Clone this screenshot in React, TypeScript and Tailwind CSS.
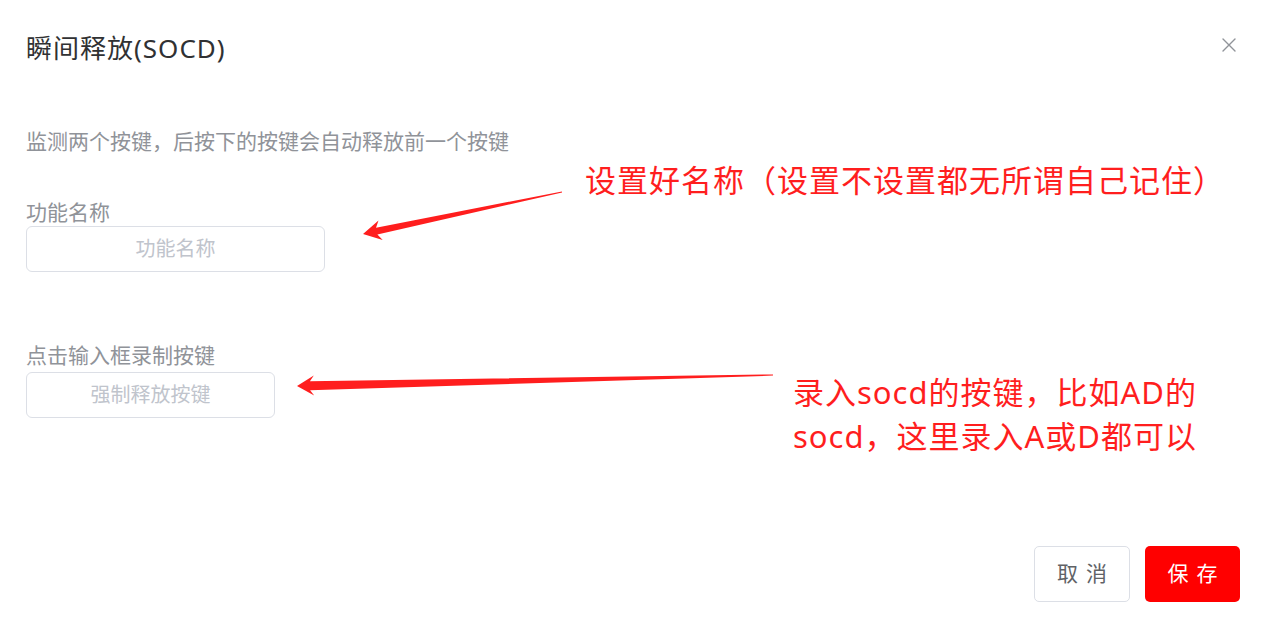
import React from "react";

const FONT = { fontFamily: '"Noto Sans", "Noto Sans CJK SC", sans-serif' };

function CloseIcon() {
  return (
    <svg width="14" height="14" viewBox="0 0 14 14" className="block">
      <path d="M1 1 L13 13 M13 1 L1 13" stroke="#909399" strokeWidth="1.4" strokeLinecap="round" />
    </svg>
  );
}

function TwoChar({ a, b }: { a: string; b: string }) {
  return (
    <span className="flex gap-[8px]">
      <span>{a}</span>
      <span>{b}</span>
    </span>
  );
}

export default function App() {
  return (
    <div className="relative w-full h-[628px] bg-white overflow-hidden" style={FONT}>
      <div className="flex flex-col px-[26px]">
        <div className="flex items-center justify-between pt-[30px] pr-[8px]">
          <h1 className="text-[26px] leading-[36px] tracking-[1px] text-[#303133] font-normal">瞬间释放(SOCD)</h1>
          <button className="p-0 -mt-[6px]">
            <CloseIcon />
          </button>
        </div>

        <p className="mt-[61px] text-[21px] leading-[28px] text-[#909399]">
          监测两个按键，后按下的按键会自动释放前一个按键
        </p>

        <label className="mt-[43px] text-[21px] leading-[28px] text-[#909399]">功能名称</label>
        <div className="w-[299px] h-[46px] border border-[#dcdfe6] rounded-[6px] flex items-center justify-center text-[20px] text-[#c0c4cc]">
          功能名称
        </div>

        <label className="mt-[69px] text-[21px] leading-[28px] text-[#909399]">点击输入框录制按键</label>
        <div className="mt-[3px] w-[249px] h-[46px] border border-[#dcdfe6] rounded-[6px] flex items-center justify-center text-[20px] text-[#c0c4cc]">
          强制释放按键
        </div>

        <div className="mt-[128px] flex justify-end gap-[15px] pr-[4px]">
          <button className="w-[96px] h-[56px] border border-[#dcdfe6] rounded-[5px] bg-white text-[21px] text-[#606266] flex items-center justify-center">
            <TwoChar a="取" b="消" />
          </button>
          <button className="w-[95px] h-[56px] rounded-[5px] bg-[#ff0000] text-[21px] text-white flex items-center justify-center">
            <TwoChar a="保" b="存" />
          </button>
        </div>
      </div>

      {/* annotations */}
      <svg className="absolute left-0 top-0 pointer-events-none" width="1270" height="628">
        <polygon
          fill="#ff1e1e"
          points="363,234 378.5,220.5 376,227.7 561.9,191.5 562.1,192.5 377.4,234.5 382.7,240.1"
        />
        <polygon
          fill="#ff1e1e"
          points="297,386 313.8,375.6 309.9,381.2 773,374.4 773,375.6 310.1,390.2 314.2,395.6"
        />
      </svg>
      <div className="absolute left-[585px] top-[160px] text-[31px] leading-[40px] tracking-[1px] text-[#ff1e1e] whitespace-nowrap">
        设置好名称（设置不设置都无所谓自己记住）
      </div>
      <div className="absolute left-[793px] top-[370px] text-[31px] leading-[44px] tracking-[1px] text-[#ff1e1e] whitespace-nowrap">
        录入socd的按键，比如AD的
        <br />
        socd，这里录入A或D都可以
      </div>
    </div>
  );
}
